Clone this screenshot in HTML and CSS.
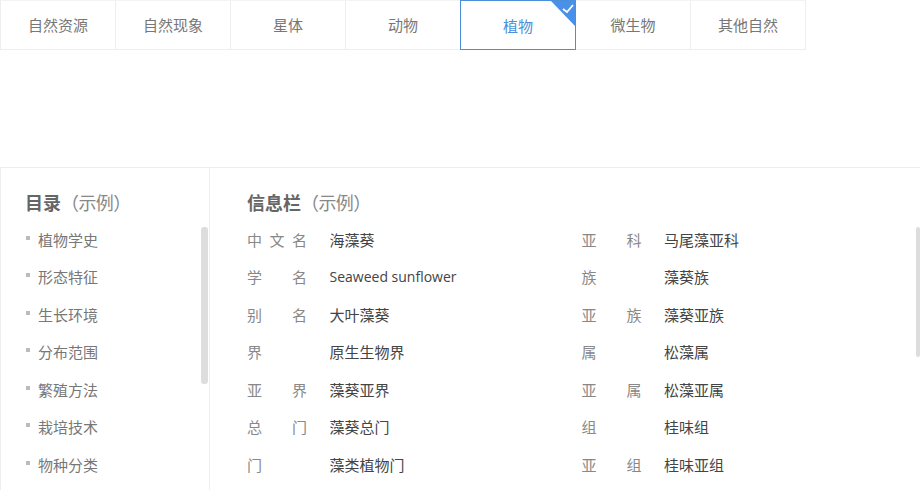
FILE: index.html
```html
<!DOCTYPE html>
<html>
	<head>
		<meta charset="utf-8" />
		<title>植物</title>
		<link rel="stylesheet" href="styles.css">
	</head>
	<body>
		<ul class="tabs">
			<li class="tab">自然资源</li>
			<li class="tab">自然现象</li>
			<li class="tab">星体</li>
			<li class="tab">动物</li>
			<li class="tab active">植物
				<svg class="tick" width="24" height="25" viewBox="0 0 24 25">
					<polygon points="0,0 24,0 24,25" fill="#4a90e8"/>
					<polyline points="12,8 16,11 22,4" fill="none" stroke="#fff" stroke-width="1.8"/>
				</svg>
			</li>
			<li class="tab">微生物</li>
			<li class="tab">其他自然</li>
		</ul>

		<div class="main">
			<div class="side">
				<h2 class="title"><b>目录</b><span>（示例）</span></h2>
				<ul class="menu">
					<li>植物学史</li>
					<li>形态特征</li>
					<li>生长环境</li>
					<li>分布范围</li>
					<li>繁殖方法</li>
					<li>栽培技术</li>
					<li>物种分类</li>
				</ul>
				<div class="thumb side-thumb"></div>
			</div>
			<div class="info">
				<h2 class="title"><b>信息栏</b><span>（示例）</span></h2>
				<div class="rows">
					<div class="row"><span class="key"><i>中</i><i>文</i><i>名</i></span><span class="val">海藻葵</span></div>
					<div class="row"><span class="key"><i>亚</i><i>科</i></span><span class="val">马尾藻亚科</span></div>
					<div class="row"><span class="key"><i>学</i><i>名</i></span><span class="val latin">Seaweed sunflower</span></div>
					<div class="row"><span class="key"><i>族</i></span><span class="val">藻葵族</span></div>
					<div class="row"><span class="key"><i>别</i><i>名</i></span><span class="val">大叶藻葵</span></div>
					<div class="row"><span class="key"><i>亚</i><i>族</i></span><span class="val">藻葵亚族</span></div>
					<div class="row"><span class="key"><i>界</i></span><span class="val">原生生物界</span></div>
					<div class="row"><span class="key"><i>属</i></span><span class="val">松藻属</span></div>
					<div class="row"><span class="key"><i>亚</i><i>界</i></span><span class="val">藻葵亚界</span></div>
					<div class="row"><span class="key"><i>亚</i><i>属</i></span><span class="val">松藻亚属</span></div>
					<div class="row"><span class="key"><i>总</i><i>门</i></span><span class="val">藻葵总门</span></div>
					<div class="row"><span class="key"><i>组</i></span><span class="val">桂味组</span></div>
					<div class="row"><span class="key"><i>门</i></span><span class="val">藻类植物门</span></div>
					<div class="row"><span class="key"><i>亚</i><i>组</i></span><span class="val">桂味亚组</span></div>
				</div>
				<div class="thumb info-thumb"></div>
			</div>
		</div>
	</body>
</html>
```
FILE: styles.css
```css
html,body{
	margin: 0;
	height: 490px;
	overflow: hidden;
	background-color: #fff;
	font-family: "Noto Sans CJK SC","Open Sans",sans-serif;
}
ul{
	margin: 0;
	padding: 0;
	list-style: none;
}
.tabs{
	display: flex;
	width: 806px;
	height: 50px;
	box-sizing: border-box;
	border: 1px solid #eeeeee;
	border-top: 1px solid #f3f3f3;
}
.tab{
	flex: none;
	width: 115px;
	line-height: 48px;
	text-align: center;
	font-size: 15px;
	color: #777;
	border-right: 1px solid #eeeeee;
	box-sizing: border-box;
}
.tab:last-child{
	width: 114px;
	border-right: 0;
}
.active{
	position: relative;
	width: 116px;
	margin: -1px 0 -1px -1px;
	line-height: 50px;
	border: 1px solid #4a90d9;
	color: #4a90d9;
}
.tick{
	position: absolute;
	top: 0;
	right: 0;
}
.main{
	display: flex;
	height: 323px;
	margin-top: 117px;
	border-top: 1px solid #eeeeee;
	border-left: 1px solid #eeeeee;
	box-sizing: border-box;
}
.side{
	position: relative;
	width: 209px;
	padding: 22px 0 0 24px;
	box-sizing: border-box;
	border-right: 1px solid #eeeeee;
}
.info{
	position: relative;
	flex: 1;
	padding: 22px 0 0 37px;
}
.title{
	display: flex;
	margin: 0 0 6.5px;
	height: 24px;
	line-height: 24px;
	font-size: 18px;
	font-weight: normal;
	color: #888;
}
.title b{
	font-weight: bold;
	color: #666;
}
.title span{
	letter-spacing: -0.6px;
}
.menu li{
	position: relative;
	height: 37.5px;
	line-height: 37.5px;
	padding-left: 13px;
	font-size: 15px;
	color: #777;
}
.menu li:before{
	content: "";
	position: absolute;
	left: 1px;
	top: 15px;
	width: 4px;
	height: 4px;
	background-color: #bbb;
}
.rows{
	display: grid;
	grid-template-columns: 334.5px 1fr;
	grid-auto-rows: 37.5px;
}
.row{
	display: flex;
	line-height: 37.5px;
	font-size: 15px;
}
.key{
	display: flex;
	justify-content: space-between;
	width: 60px;
	margin-right: 22.5px;
	color: #888;
}
.key i{
	font-style: normal;
}
.val{
	color: #444;
}
.latin{
	font-family: "Open Sans",sans-serif;
	font-size: 14px;
}
.thumb{
	position: absolute;
	width: 7px;
	border-radius: 3px;
	background-color: #dddddd;
}
.side-thumb{
	top: 59px;
	right: 1px;
	height: 157px;
}
.info-thumb{
	top: 59px;
	right: 0;
	height: 130px;
	width: 4px;
}
```
